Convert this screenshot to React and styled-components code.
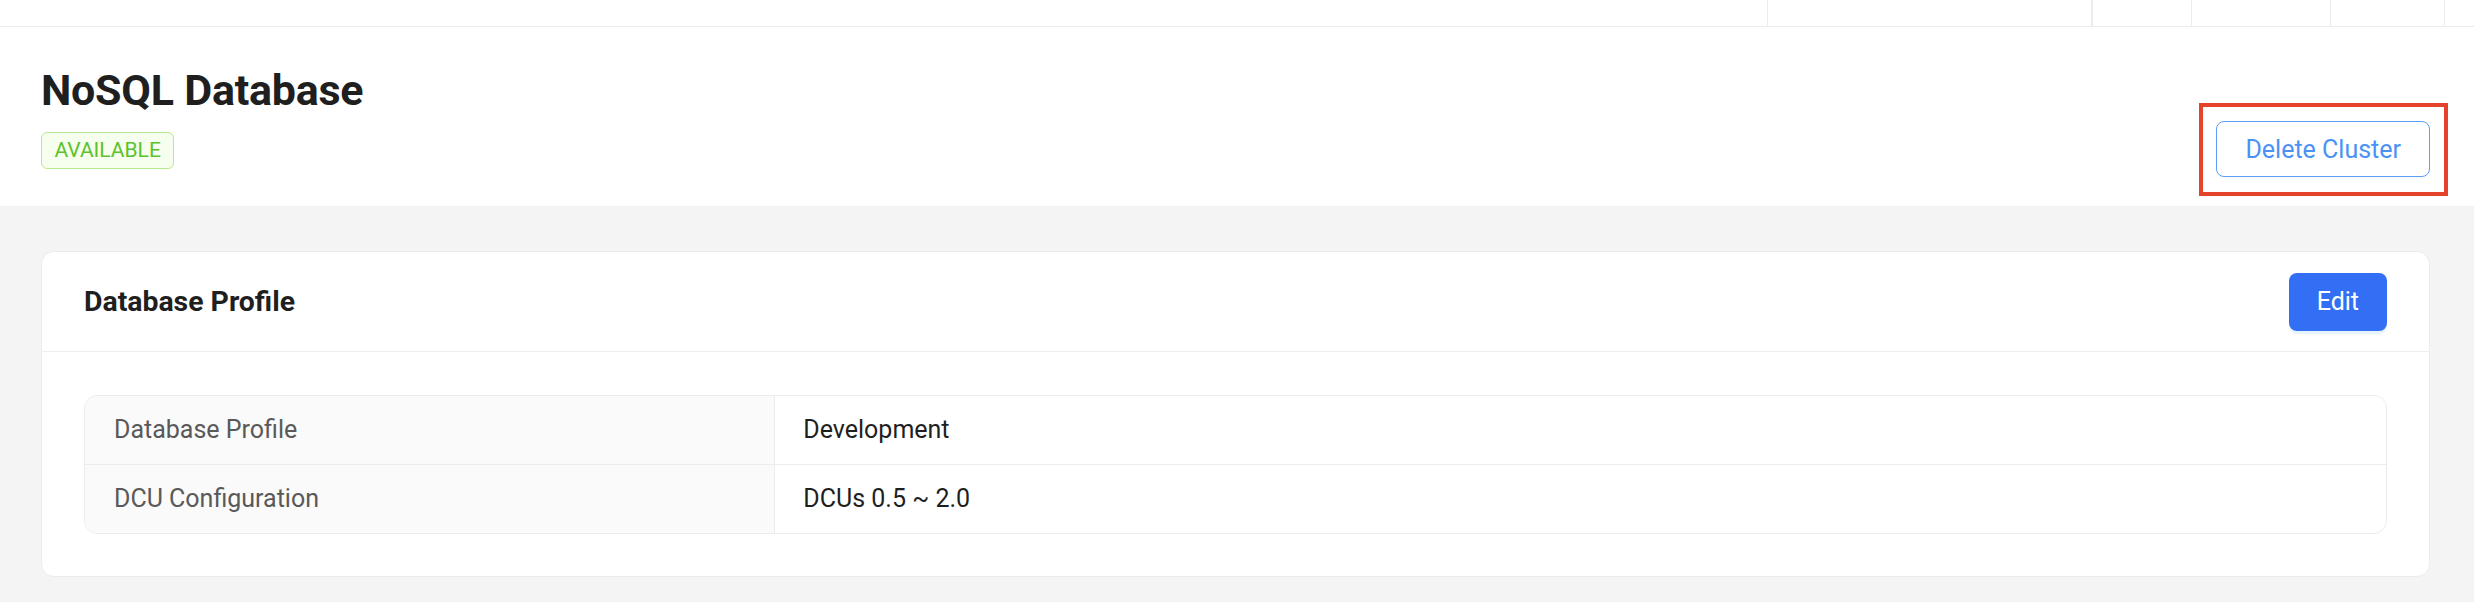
import React from "react";
import styled, { createGlobalStyle } from "styled-components";

const GlobalStyle = createGlobalStyle`
  html, body {
    margin: 0;
    padding: 0;
    background: #f4f4f4;
  }
  body {
    font-family: Roboto, "Liberation Sans", Arial, sans-serif;
    color: #1f1f1f;
  }
  *, *::before, *::after { box-sizing: border-box; }
`;

const TopStrip = styled.div`
  display: flex;
  height: 27px;
  background: #fff;
  border-bottom: 1px solid #ececec;
`;

const StripSpacer = styled.div`
  flex: 1;
`;

const StripCell = styled.div`
  flex: 0 0 ${(p) => p.$w}px;
  border-left: ${(p) => (p.$thick ? 2 : 1)}px solid #ececec;
`;

const PageHeader = styled.header`
  display: flex;
  justify-content: space-between;
  align-items: flex-end;
  background: #fff;
  padding: 38px 44px 29px 41px;
`;

const TitleBlock = styled.div`
  display: flex;
  flex-direction: column;
  align-items: flex-start;
  margin-bottom: 8px;
`;

const Title = styled.h1`
  margin: 0;
  font-size: 43px;
  line-height: 50px;
  font-weight: 700;
  letter-spacing: -0.25px;
  color: #1f1f1f;
`;

const StatusTag = styled.span`
  margin-top: 17px;
  height: 37px;
  padding: 0 12.5px;
  font-size: 21px;
  line-height: 35px;
  color: #5cc22c;
  background: #f6ffed;
  border: 1px solid #b7eb8f;
  border-radius: 6px;
`;

const Highlighted = styled.div`
  position: relative;
`;

const HighlightFrame = styled.div`
  position: absolute;
  top: -18px;
  left: -17px;
  right: -18px;
  bottom: -19px;
  border: 4px solid #e6432c;
  pointer-events: none;
`;

const OutlineButton = styled.button`
  height: 56px;
  padding: 0 28px;
  font-family: inherit;
  font-size: 25px;
  color: #4a92f6;
  background: #fff;
  border: 1px solid #5c9ff7;
  border-radius: 8px;
  box-shadow: 0 2px 0 rgba(0, 0, 0, 0.02);
  cursor: pointer;
`;

const PrimaryButton = styled.button`
  height: 58px;
  padding: 0 28px;
  font-family: inherit;
  font-size: 25px;
  color: #fff;
  background: #336ff5;
  border: none;
  border-radius: 8px;
  box-shadow: 0 3px 0 rgba(5, 145, 255, 0.1);
  cursor: pointer;
`;

const Main = styled.main`
  padding: 45px 44px 40px 41px;
`;

const Card = styled.section`
  background: #fff;
  border: 1px solid #ececec;
  border-radius: 13px;
`;

const CardHeader = styled.div`
  display: flex;
  justify-content: space-between;
  align-items: center;
  height: 100px;
  padding: 0 42px;
  border-bottom: 1px solid #eeeeee;
`;

const CardTitle = styled.h2`
  margin: 0;
  font-size: 28.4px;
  font-weight: 700;
  color: #1f1f1f;
`;

const CardBody = styled.div`
  padding: 43px 42px 42px;
`;

const InfoTable = styled.div`
  border: 1px solid #ececec;
  border-radius: 13px;
  overflow: hidden;
`;

const InfoRow = styled.div`
  display: grid;
  grid-template-columns: 30% 1fr;
  & + & {
    border-top: 1px solid #ececec;
  }
`;

const LabelCell = styled.div`
  padding: 15px 29px;
  font-size: 25px;
  line-height: 38px;
  color: #595959;
  background: #fafafa;
  border-right: 1px solid #ececec;
`;

const ValueCell = styled.div`
  padding: 15px 28px;
  font-size: 25px;
  line-height: 38px;
  color: #1f1f1f;
`;

const rows = [
  { label: "Database Profile", value: "Development" },
  { label: "DCU Configuration", value: "DCUs 0.5 ~ 2.0" },
];

const stripCells = [
  { w: 324 },
  { w: 100, thick: true },
  { w: 139 },
  { w: 114 },
  { w: 30 },
];

export default function App() {
  return (
    <>
      <GlobalStyle />
      <TopStrip>
        <StripSpacer />
        {stripCells.map((c, i) => (
          <StripCell key={i} $w={c.w} $thick={c.thick} />
        ))}
      </TopStrip>
      <PageHeader>
        <TitleBlock>
          <Title>NoSQL Database</Title>
          <StatusTag>AVAILABLE</StatusTag>
        </TitleBlock>
        <Highlighted>
          <OutlineButton>Delete Cluster</OutlineButton>
          <HighlightFrame />
        </Highlighted>
      </PageHeader>
      <Main>
        <Card>
          <CardHeader>
            <CardTitle>Database Profile</CardTitle>
            <PrimaryButton>Edit</PrimaryButton>
          </CardHeader>
          <CardBody>
            <InfoTable>
              {rows.map((r) => (
                <InfoRow key={r.label}>
                  <LabelCell>{r.label}</LabelCell>
                  <ValueCell>{r.value}</ValueCell>
                </InfoRow>
              ))}
            </InfoTable>
          </CardBody>
        </Card>
      </Main>
    </>
  );
}
